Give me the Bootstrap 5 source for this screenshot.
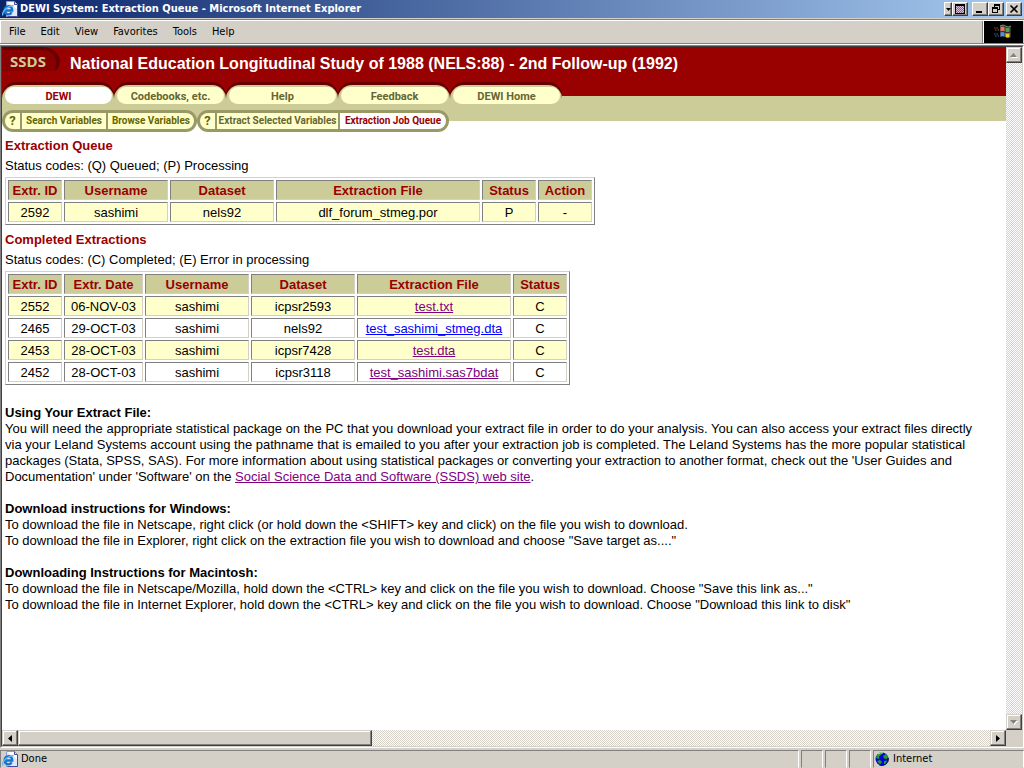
<!DOCTYPE html>
<html lang="en">
<head>
<meta charset="utf-8">
<meta name="viewport" content="width=device-width, initial-scale=1">
<title>DEWI System: Extraction Queue</title>
<link href="https://cdn.jsdelivr.net/npm/bootstrap@5.3.0/dist/css/bootstrap.min.css" rel="stylesheet">
<style>
:root{--face:#d4d0c8;--shade:#808080;--dark:#404040;--red:#990000;--khaki:#cccc99;--olive:#999966;--cream:#ffffcc}
body{font:13px/16px "Liberation Sans",Arial,sans-serif;color:#000;background:var(--face)}
svg{display:block;flex:none}
button{border-radius:0;color:#000}
.win-ui{font:11px/14px "DejaVu Sans Condensed","DejaVu Sans",sans-serif}
.title-strip{height:18px;padding:0 2px;background:linear-gradient(90deg,#0a246a,#a6caf0);color:#fff;font-weight:bold}
.title-strip>span{padding-left:2px}
.win-btn{display:flex;align-items:center;justify-content:center;width:16px;height:14px;padding:0;background:var(--face);border:1px solid;border-color:#fff var(--dark) var(--dark) #fff;box-shadow:inset -1px -1px 0 var(--shade)}
.win-btn.slim{width:8px}
.win-btn.apart{margin-right:2px}
.win-btn.bar-btn{width:16px;height:16px;border-color:var(--face) var(--dark) var(--dark) var(--face);box-shadow:inset -1px -1px 0 var(--shade),inset 1px 1px 0 #fff}
.menu-strip{height:25px;margin-top:1px;border-top:1px solid var(--shade);border-bottom:1px solid var(--shade);box-shadow:inset 1px 1px 0 #fff,0 1px 0 #fff}
.menu-strip button{background:none;border:0;padding:0}
.menu-list{gap:15px;padding:0 9px}
.flag-box{width:42px;margin-top:1px;background:#000;border-left:1px solid var(--shade);box-shadow:inset 1px 0 0 #fff;border-right:1px solid var(--face)}
.view-frame{margin-top:1px;border:1px solid;border-color:var(--shade) #fff #fff var(--shade);min-height:0}
.view-inner{border:1px solid;border-color:var(--dark) var(--face) var(--face) var(--dark);min-height:0}
.dither{background:repeating-conic-gradient(#fff 0 25%,var(--face) 0 50%) 0 0/2px 2px}
.h-thumb{width:354px;height:16px;border:1px solid;border-color:var(--face) var(--dark) var(--dark) var(--face);background:var(--face);box-shadow:inset -1px -1px 0 var(--shade),inset 1px 1px 0 #fff}
.page-view{background:#fff;overflow:hidden}
.masthead{height:35px;background:var(--red)}
.ssds-mark{width:58px;height:24px;border:solid #660000;border-width:3px 4px 0 0;border-radius:0 22px 8px 0/0 18px 12px 0;background:#880000;color:var(--khaki);font:bold 15px/23px "Open Sans",sans-serif;padding-left:8px;text-decoration:none}
.masthead h1{font:bold 16px/20px "Liberation Sans",Arial,sans-serif;color:#fff;padding:7px 0 0 10px;white-space:nowrap}
.tab-row{height:26px;padding-top:3px;background:linear-gradient(var(--red) 14px,var(--khaki) 0)}
.tab-cap{width:112px;height:23px;padding:2px 2px 0 3px;background:var(--khaki);border-radius:14px 14px 0 0;box-shadow:0 -3px 0 #660000}
.tab-cap a{display:block;height:17px;border-radius:9px;background:var(--cream);color:#666633;font:bold 11px/19px Roboto,sans-serif;text-align:center;text-decoration:none}
.tab-cap a.current,.sub-group a.current{background:#fff;color:var(--red)}
.sub-row{height:24px;padding-top:2px;background:linear-gradient(var(--khaki) 13px,#fff 0)}
.sub-group{height:22px;padding:3px;gap:2px;background:var(--olive);border-radius:11px}
.sub-group a{height:16px;background:var(--cream);color:#666600;font:bold 10px/16px Roboto,sans-serif;text-align:center;text-decoration:none;white-space:nowrap}
.sub-group a:first-child{width:15px;border-radius:8px 0 0 8px;font-size:13px}
.sub-group a:last-child{border-radius:0 8px 8px 0}
.w-search{width:84px}.w-browse{width:86px}.w-extract{width:121px;color:#666633!important}.w-queue{width:106px}
.doc{padding:6px 3px}
.doc h2{font:bold 13px/16px "Liberation Sans",Arial,sans-serif;color:var(--red);margin:0 0 4px}
.doc h3{font:bold 13px/16px "Liberation Sans",Arial,sans-serif;margin:0}
.doc p{margin:0 0 16px;max-width:984px}
.doc .codes{margin:0 0 3px}
.doc a{color:#800080}
.doc a.fresh{color:#0000ff}
.grid-box{table-layout:fixed;border:1px solid;border-color:var(--face) var(--shade) var(--shade) var(--face);border-collapse:separate;border-spacing:2px;text-align:center;margin-bottom:7px}
.grid-box th,.grid-box td{height:20px;padding:2px 0 0;line-height:16px;border:1px solid;border-color:var(--shade) var(--face) var(--face) var(--shade);white-space:nowrap}
.grid-box th{background:var(--khaki);color:var(--red);text-align:center}
.grid-box tbody tr:nth-child(odd) td{background:var(--cream)}
.c-54{width:54px}.c-79{width:79px}.c-104{width:104px}.c-154{width:154px}.c-204{width:204px}
.queue-tbl{width:590px}.done-tbl{width:565px;margin-bottom:20px}
.status-strip{height:19px;margin-top:1px;gap:2px;border-top:1px solid var(--face)}
.status-cell{border:1px solid;border-color:var(--shade) #fff var(--face) var(--shade);padding-left:1px;gap:3px}
.status-cell.blank{width:22px}.status-cell.zone{width:151px}
</style>
</head>
<body class="vh-100 d-flex flex-column overflow-hidden">
<svg width="0" height="0" class="position-absolute" aria-hidden="true">
  <symbol id="ie-page" viewBox="0 0 16 16">
    <path d="M4.500.5h8l3 3v12h-11z" fill="#dfe6fa" stroke="#8c9ccc"/>
    <path d="M5 1h7v3h3v4z" fill="#fff"/>
    <path d="M12.500.5v3h3M15.500 4v11.500h-10" fill="none" stroke="#4a4a94"/>
    <path d="M3 9.500h7.200c0-6-7.600-5.400-7.600 0 0 4.400 5.600 5 7 1.800" fill="none" stroke="#1774cc" stroke-width="2.400"/>
    <path d="M.8 14.500C-.5 11 6 4.200 11.500 4.800" fill="none" stroke="#62b8f0" stroke-width="1.400"/>
  </symbol>
</svg>

<header class="win-ui title-strip d-flex align-items-center">
  <svg width="16" height="16" aria-hidden="true"><use href="#ie-page"/></svg>
  <span class="flex-grow-1 text-nowrap">DEWI System: Extraction Queue - Microsoft Internet Explorer</span>
  <button class="win-btn slim" aria-label="Window options"><svg width="5" height="3"><path d="M0 0h5L2.500 3z"/></svg></button>
  <button class="win-btn me-1" aria-label="Desktop"><svg width="10" height="10" shape-rendering="crispEdges"><path d="M0 0h10v10H0z"/><path d="M1 2h8v7H1z" fill="#a050a0"/><path d="M1 2.500h8M1 4.500h8M1 6.500h8M1 8.500h8" stroke="#e0c0e0" stroke-dasharray="1 1"/><path d="M2 3.500h7M2 5.500h7M2 7.500h7" stroke="#e0c0e0" stroke-dasharray="1 1"/></svg></button>
  <button class="win-btn" aria-label="Minimize"><svg width="10" height="10"><path d="M1 7h6v2H1z"/></svg></button>
  <button class="win-btn apart" aria-label="Restore"><svg width="10" height="10" shape-rendering="crispEdges"><path d="M3 0h6v6H7V5h1V2H4v1H3zM1 3h6v6H1zM2 5v3h4V5z" fill-rule="evenodd"/></svg></button>
  <button class="win-btn" aria-label="Close"><svg width="10" height="10"><path d="M1.500 1.500l7 7M8.500 1.500l-7 7" stroke="#000" stroke-width="1.600"/></svg></button>
</header>

<nav class="win-ui menu-strip d-flex flex-shrink-0" aria-label="Menu bar">
  <div class="menu-list d-flex align-items-center flex-grow-1">
    <button>File</button><button>Edit</button><button>View</button><button>Favorites</button><button>Tools</button><button>Help</button>
  </div>
  <div class="flag-box d-flex align-items-center justify-content-center">
    <svg width="20" height="18" viewBox="0 0 20 18" aria-hidden="true">
      <path d="M7 3q3-2 5.500 0T18 3v11q-3 2-5.500 0T7 14" fill="#333"/>
      <path d="M7.500 4q2-1 4 .3v4q-2-1.300-4 0z" fill="#e87858"/><path d="M12.500 4.500q2 1 4 0v4q-2 1-4 0z" fill="#50a050"/>
      <path d="M7.500 9.500q2-1 4 .3v4q-2-1.300-4 0z" fill="#5090e0"/><path d="M12.500 10q2 1 4 0v4q-2 1-4 0z" fill="#f8c820"/>
      <path d="M1 5h5M2 7h4" stroke="#a05040" stroke-dasharray="1.500 1"/><path d="M1 11h5M2 13h4" stroke="#4070a0" stroke-dasharray="1.500 1"/>
      <path d="M7 3q3-2 5.500 0T18 3" fill="none" stroke="#809080"/>
    </svg>
  </div>
</nav>

<div class="view-frame d-flex flex-column flex-grow-1">
<div class="view-inner d-flex flex-column flex-grow-1">
  <div class="d-flex flex-grow-1 overflow-hidden">
    <div class="page-view flex-grow-1">
      <div class="masthead d-flex align-items-start">
        <a class="ssds-mark" href="#">SSDS</a>
        <h1 class="m-0">National Education Longitudinal Study of 1988 (NELS:88) - 2nd Follow-up (1992)</h1>
      </div>
      <nav class="tab-row d-flex" aria-label="Sections">
        <div class="tab-cap"><a class="current" href="#">DEWI</a></div>
        <div class="tab-cap"><a href="#">Codebooks, etc.</a></div>
        <div class="tab-cap"><a href="#">Help</a></div>
        <div class="tab-cap"><a href="#">Feedback</a></div>
        <div class="tab-cap"><a href="#">DEWI Home</a></div>
      </nav>
      <nav class="sub-row d-flex" aria-label="DEWI tools">
        <div class="sub-group d-flex"><a href="#">?</a><a class="w-search" href="#">Search Variables</a><a class="w-browse" href="#">Browse Variables</a></div>
        <div class="sub-group d-flex"><a href="#">?</a><a class="w-extract" href="#">Extract Selected Variables</a><a class="w-queue current" href="#">Extraction Job Queue</a></div>
      </nav>

      <main class="doc">
        <h2>Extraction Queue</h2>
        <p class="codes">Status codes: (Q) Queued; (P) Processing</p>
        <table class="grid-box queue-tbl">
          <thead><tr><th class="c-54">Extr. ID</th><th class="c-104">Username</th><th class="c-104">Dataset</th><th class="c-204">Extraction File</th><th class="c-54">Status</th><th class="c-54">Action</th></tr></thead>
          <tbody><tr><td>2592</td><td>sashimi</td><td>nels92</td><td>dlf_forum_stmeg.por</td><td>P</td><td>-</td></tr></tbody>
        </table>
        <h2>Completed Extractions</h2>
        <p class="codes">Status codes: (C) Completed; (E) Error in processing</p>
        <table class="grid-box done-tbl">
          <thead><tr><th class="c-54">Extr. ID</th><th class="c-79">Extr. Date</th><th class="c-104">Username</th><th class="c-104">Dataset</th><th class="c-154">Extraction File</th><th class="c-54">Status</th></tr></thead>
          <tbody>
            <tr><td>2552</td><td>06-NOV-03</td><td>sashimi</td><td>icpsr2593</td><td><a href="#">test.txt</a></td><td>C</td></tr>
            <tr><td>2465</td><td>29-OCT-03</td><td>sashimi</td><td>nels92</td><td><a class="fresh" href="#">test_sashimi_stmeg.dta</a></td><td>C</td></tr>
            <tr><td>2453</td><td>28-OCT-03</td><td>sashimi</td><td>icpsr7428</td><td><a href="#">test.dta</a></td><td>C</td></tr>
            <tr><td>2452</td><td>28-OCT-03</td><td>sashimi</td><td>icpsr3118</td><td><a href="#">test_sashimi.sas7bdat</a></td><td>C</td></tr>
          </tbody>
        </table>
        <h3>Using Your Extract File:</h3>
        <p>You will need the appropriate statistical package on the PC that you download your extract file in order to do your analysis. You can also access your extract files directly via your Leland Systems account using the pathname that is emailed to you after your extraction job is completed. The Leland Systems has the more popular statistical packages (Stata, SPSS, SAS). For more information about using statistical packages or converting your extraction to another format, check out the 'User Guides and Documentation' under 'Software' on the <a href="#">Social Science Data and Software (SSDS) web site</a>.</p>
        <h3>Download instructions for Windows:</h3>
        <p>To download the file in Netscape, right click (or hold down the &lt;SHIFT&gt; key and click) on the file you wish to download.<br>To download the file in Explorer, right click on the extraction file you wish to download and choose "Save target as...."</p>
        <h3>Downloading Instructions for Macintosh:</h3>
        <p>To download the file in Netscape/Mozilla, hold down the &lt;CTRL&gt; key and click on the file you wish to download. Choose "Save this link as..."<br>To download the file in Internet Explorer, hold down the &lt;CTRL&gt; key and click on the file you wish to download. Choose "Download this link to disk"</p>
      </main>
    </div>
    <div class="dither d-flex flex-column justify-content-between">
      <button class="win-btn bar-btn" aria-label="Scroll up"><svg width="8" height="5"><path d="M1 5h7L4.500 1z" fill="#fff"/><path d="M0 4h7L3.500 0z" fill="#808080"/></svg></button>
      <button class="win-btn bar-btn" aria-label="Scroll down"><svg width="8" height="5"><path d="M1 1h7L4.500 5z" fill="#fff"/><path d="M0 0h7L3.500 4z" fill="#808080"/></svg></button>
    </div>
  </div>
  <div class="d-flex flex-shrink-0">
    <div class="dither d-flex flex-grow-1">
      <button class="win-btn bar-btn" aria-label="Scroll left"><svg width="4" height="7"><path d="M4 0v7L0 3.500z"/></svg></button>
      <div class="h-thumb me-auto"></div>
      <button class="win-btn bar-btn" aria-label="Scroll right"><svg width="4" height="7"><path d="M0 0v7l4-3.500z"/></svg></button>
    </div>
    <div class="bar-corner pe-3"></div>
  </div>
</div>
</div>

<footer class="win-ui status-strip d-flex flex-shrink-0">
  <div class="status-cell d-flex align-items-center flex-grow-1"><svg width="16" height="16" aria-hidden="true"><use href="#ie-page"/></svg>Done</div>
  <div class="status-cell blank"></div><div class="status-cell blank"></div><div class="status-cell blank"></div>
  <div class="status-cell zone d-flex align-items-center gap-1">
    <svg width="14" height="14" viewBox="0 0 14 14" aria-hidden="true"><circle cx="7" cy="7" r="6.500" fill="#0000d8"/><path d="M2 3q3-4 6-2.500L6 3 4 4.500 4.500 7 1 6zM8 4l3-2 2 3-1 2-3-.5zM2 9l3-1 2 2-2 2.500zM9 9l3-.5-1 3-2 1z" fill="#20a020"/><path d="M13.300 6a6.500 6.500 0 0 1-9 7" fill="none" stroke="#000050"/><path d="M3 2q3-2 5-1" fill="none" stroke="#d0e0d0"/></svg>Internet
  </div>
</footer>
<script src="https://cdn.jsdelivr.net/npm/bootstrap@5.3.0/dist/js/bootstrap.bundle.min.js"></script>
</body>
</html>
